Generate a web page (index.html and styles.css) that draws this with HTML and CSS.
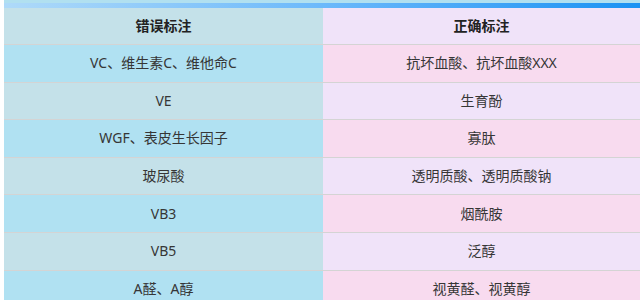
FILE: index.html
```html
<!DOCTYPE html>
<html lang="zh">
<head>
<meta charset="utf-8">
<title>错误标注 / 正确标注</title>
<link rel="stylesheet" href="styles.css">
</head>
<body>
<div class="page">
  <div class="top-strip"></div>
  <div class="accent-bar"></div>
  <table class="compare">
    <colgroup><col class="col-left"><col class="col-right"></colgroup>
    <thead>
      <tr><th class="l">错误标注</th><th class="r">正确标注</th></tr>
    </thead>
    <tbody>
      <tr class="odd"><td class="l">VC、维生素C、维他命C</td><td class="r">抗坏血酸、抗坏血酸XXX</td></tr>
      <tr class="even"><td class="l">VE</td><td class="r">生育酚</td></tr>
      <tr class="odd"><td class="l">WGF、表皮生长因子</td><td class="r">寡肽</td></tr>
      <tr class="even"><td class="l">玻尿酸</td><td class="r">透明质酸、透明质酸钠</td></tr>
      <tr class="odd"><td class="l">VB3</td><td class="r">烟酰胺</td></tr>
      <tr class="even"><td class="l">VB5</td><td class="r">泛醇</td></tr>
      <tr class="odd"><td class="l">A醛、A醇</td><td class="r">视黄醛、视黄醇</td></tr>
    </tbody>
  </table>
</div>
</body>
</html>
```

FILE: styles.css
```css
html, body {
  margin: 0;
  padding: 0;
  background: #ffffff;
}
body {
  font-family: "Noto Sans", "Noto Sans CJK SC", sans-serif;
  font-size: 14px;
  color: #363636;
  overflow: hidden;
}
.page {
  padding-left: 4px;
}
.top-strip {
  height: 3px;
  background: #b1e0f0;
}
.accent-bar {
  height: 5px;
  background: linear-gradient(to right, #afdaf9 0%, #6cb9fb 50%, #1a92f3 100%);
}
.compare {
  width: 636px;
  border-collapse: collapse;
  table-layout: fixed;
}
.col-left { width: 319px; }
.col-right { width: 317px; }
.compare th,
.compare td {
  height: 36.6px;
  padding: 0;
  text-align: center;
  vertical-align: middle;
  border-bottom: 1px solid #d4d4d4;
  line-height: 20px;
}
.compare th {
  font-weight: bold;
  color: #222222;
  height: 36px;
}
thead .l, .even .l { background: #c4e1e9; }
thead .r, .even .r { background: #f0e3f9; }
.odd .l { background: #b0e1f2; }
.odd .r { background: #f8dbef; }
```
